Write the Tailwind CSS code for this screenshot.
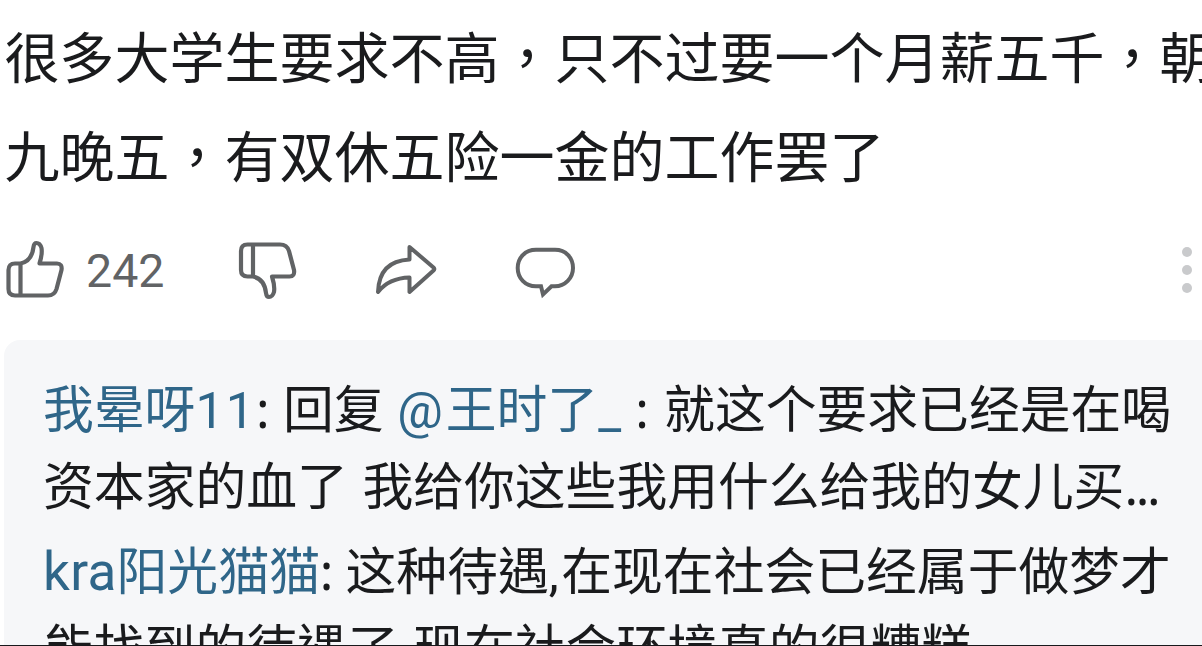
<!DOCTYPE html>
<html lang="zh-TW">
<head>
    <meta charset="UTF-8">
    <meta name="viewport" content="width=device-width, initial-scale=1.0">
    <title>评论</title>
    <script src="https://cdn.jsdelivr.net/npm/@tailwindcss/browser@4"></script>
</head>
<body class="bg-white text-[#1a1b1d] font-['Roboto','Noto_Sans_CJK_TC',sans-serif]">
    <div class="flex flex-col w-[1202px] h-[646px] overflow-hidden border-b border-[#18191c]">
        <!-- Comment -->
        <div class="shrink-0 pl-[4.5px] pt-[10px] text-[55px] leading-[99px] whitespace-nowrap">
            <p>很多大学生要求不高，只不过要一个月薪五千，朝</p>
            <p>九晚五，有双休五险一金的工作罢了</p>
        </div>

        <!-- Actions -->
        <div class="shrink-0 flex items-center h-[132px] pb-[9px] text-[#616365]">
            <svg class="w-[66px] h-[66px] shrink-0 ml-[2px]" viewBox="2 236 66 66" fill="none" stroke="currentColor" stroke-width="4.2" stroke-linejoin="round">
                <path d="M20.5 262.5H15Q8.5 262.5 8.5 269V288Q8.5 294.500 15 294.500H48Q54.500 294.500 56.500 288L61.500 269Q62.500 262.500 57 262.500H39.500Q42.500 253 41.500 247Q40 242 36.500 242Q34 242 33.500 246Q32 260 20.500 262.500ZM20.500 262.500V294.500"/>
            </svg>
            <span class="ml-[18px] w-[78px] pt-[3px] text-[46.5px] leading-none">242</span>
            <svg class="w-[66px] h-[66px] shrink-0 ml-[70px]" viewBox="234 236 66 66" fill="none" stroke="currentColor" stroke-width="4.2" stroke-linejoin="round">
                <path d="M253 275.500H247.500Q241 275.500 241 269V250Q241 243.500 247.500 243.500H280Q287 243.500 289 250L294 269Q295 275.500 289.500 275.500H272Q275 285 274 291Q272.500 296 269 296Q266.500 296 266 292Q264.500 278 253 275.500ZM253 275.500V243.500"/>
            </svg>
            <svg class="w-[66px] h-[66px] shrink-0 ml-[72px]" viewBox="372 236 66 66" fill="none" stroke="currentColor" stroke-width="4" stroke-linejoin="round">
                <path d="M409.500 246L433.500 266.500Q435 268 433.500 269.500L409.500 291V276.500Q389 277 378 291Q379 260 409.500 258.500Z"/>
            </svg>
            <svg class="w-[66px] h-[66px] shrink-0 ml-[74px]" viewBox="512 236 66 66" fill="none" stroke="currentColor" stroke-width="4">
                <path d="M536 248.800H555C566 248.800 573 257 573 267C573 277 565 285.300 555 285.300H551.500L543 293.500L541 285.300H536C525 285.300 517.700 277 517.700 267C517.700 257 525 248.800 536 248.800Z"/>
            </svg>
            <div class="ml-auto mr-[10px] pt-px flex flex-col gap-2">
                <span class="size-[10px] rounded-full bg-[#c9cacc]"></span>
                <span class="size-[10px] rounded-full bg-[#c9cacc]"></span>
                <span class="size-[10px] rounded-full bg-[#c9cacc]"></span>
            </div>
        </div>

        <!-- Replies -->
        <div class="shrink-0 ml-1 pl-[39px] pt-8 rounded-tl-2xl bg-[#f6f7f9] text-[50.8px] leading-[77px] whitespace-nowrap">
            <div>
                <p><span class="text-[#2f6689]">我晕呀<span class="tracking-[1.8px]">11</span></span><span class="font-['Noto_Sans'] leading-none">: </span>回复 <span class="text-[#2f6689]"><span class="tracking-[3px]">@</span>王时了_</span><span class="font-['Noto_Sans'] leading-none tracking-[1px]"> : </span>就这个要求已经是在喝</p>
                <p>资本家的血了<span class="tracking-[2px]"> </span>我给你这些我用什么给我的女儿买<span class="font-['Noto_Sans'] leading-none tracking-[-2.3px]">...</span></p>
            </div>
            <div class="mt-2">
                <p><span class="text-[#2f6689]"><span class="text-[53px] leading-none tracking-[0.3px]">kra</span>阳光猫猫</span><span class="font-['Noto_Sans'] leading-none tracking-[-0.5px]">: </span>这种待遇<span class="tracking-[2.5px]">,</span>在现在社会已经属于做梦才</p>
                <p>能找到的待遇了<span class="tracking-[2px]"> </span>现在社会环境真的很糟糕</p>
            </div>
        </div>
    </div>
</body>
</html>
